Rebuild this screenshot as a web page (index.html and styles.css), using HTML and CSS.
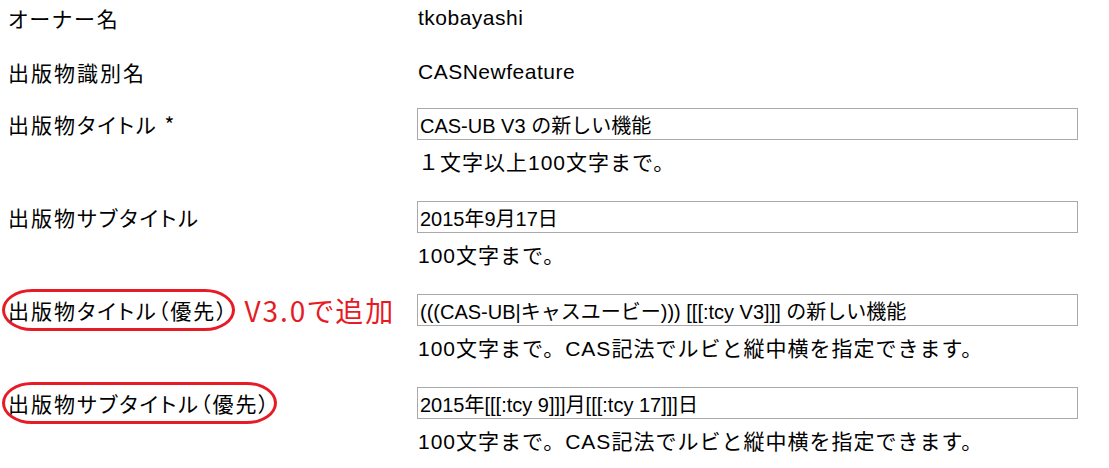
FILE: index.html
```html
<!DOCTYPE html>
<html lang="ja">
<head>
    <meta charset="UTF-8">
    <meta name="viewport" content="width=device-width, initial-scale=1.0">
    <title>出版物の編集</title>
    <link rel="stylesheet" href="styles.css">
</head>
<body>

    <div class="row">
        <div class="label">オーナー名</div>
        <div class="value">tkobayashi</div>
    </div>

    <div class="row">
        <div class="label">出版物識別名</div>
        <div class="value">CASNewfeature</div>
    </div>

    <div class="row field">
        <div class="label">出版物タイトル *</div>
        <div>
            <input class="text" type="text" value="CAS-UB V3 の新しい機能">
            <p class="hint">１文字以上100文字まで。</p>
        </div>
    </div>

    <div class="row field">
        <div class="label">出版物サブタイトル</div>
        <div>
            <input class="text" type="text" value="2015年9月17日">
            <p class="hint">100文字まで。</p>
        </div>
    </div>

    <div class="row field">
        <div class="label tight">
            <span class="mark">出版物タイトル（優先）</span>
            <span class="note">V3.0で追加</span>
        </div>
        <div>
            <input class="text" type="text" value="(((CAS-UB|キャスユービー))) [[[:tcy V3]]] の新しい機能">
            <p class="hint">100文字まで。CAS記法でルビと縦中横を指定できます。</p>
        </div>
    </div>

    <div class="row field">
        <div class="label tight">
            <span class="mark">出版物サブタイトル（優先）</span>
        </div>
        <div>
            <input class="text" type="text" value="2015年[[[:tcy 9]]]月[[[:tcy 17]]]日">
            <p class="hint">100文字まで。CAS記法でルビと縦中横を指定できます。</p>
        </div>
    </div>

</body>
</html>
```

FILE: styles.css
```css
* {
    margin: 0;
    padding: 0;
    box-sizing: border-box;
}

body {
    background-color: white;
    color: black;
    font-family: "Noto Sans CJK JP", sans-serif;
    font-size: 21px;
    padding: 2px 0 0 8px;
}

.row {
    display: grid;
    grid-template-columns: 409px 661px;
    align-items: start;
    margin-bottom: 22px;
}

.row:nth-child(2) {
    margin-bottom: 20px;
}

.row.field {
    margin-bottom: 23px;
}

.label {
    height: 32px;
    line-height: 32px;
    letter-spacing: 2px;
    font-feature-settings: "palt";
    white-space: nowrap;
}

.value {
    font-family: "Liberation Sans", sans-serif;
    font-size: 21px;
    letter-spacing: 0.5px;
    line-height: 32px;
    padding-left: 1px;
}

.mark {
    display: inline-block;
    border: 3px solid #e61b25;
    border-radius: 30px / 21px;
    padding: 2px 3px;
    margin: -5px 0 -5px -6px;
    line-height: 32px;
    vertical-align: top;
}

.note {
    display: inline-block;
    color: #e61b25;
    font-size: 28px;
    letter-spacing: 2px;
    margin-left: 3px;
    line-height: 32px;
    vertical-align: top;
}

.text {
    display: block;
    width: 661px;
    height: 32px;
    border: 1px solid #a9a9a9;
    padding: 0 2px;
    font-family: "Liberation Sans", "Noto Sans CJK JP", sans-serif;
    font-size: 20px;
    color: black;
    outline: none;
}

.hint {
    margin-top: 8px;
    line-height: 30px;
    letter-spacing: 1px;
    padding-left: 1px;
    font-family: "Liberation Sans", "Noto Sans CJK JP", sans-serif;
}
```
